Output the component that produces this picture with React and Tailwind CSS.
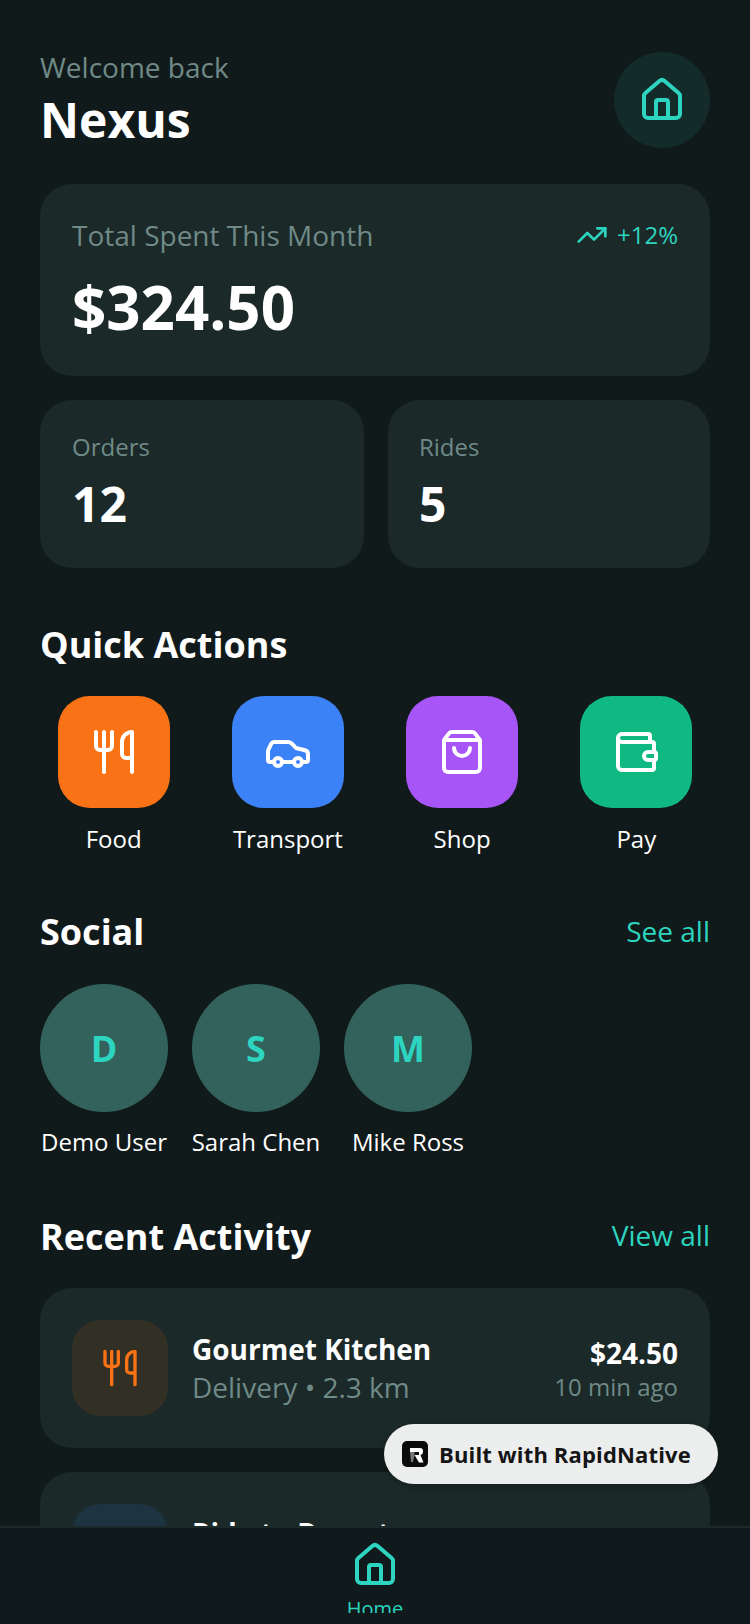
import React from "react";
import { House, TrendingUp, Utensils, Car, ShoppingBag, Wallet } from "lucide-react";

const actions = [
  { label: "Food", Icon: Utensils, bg: "bg-[#f97316]" },
  { label: "Transport", Icon: Car, bg: "bg-[#3b82f6]" },
  { label: "Shop", Icon: ShoppingBag, bg: "bg-[#a855f7]" },
  { label: "Pay", Icon: Wallet, bg: "bg-[#10b981]" },
];
const people = [
  { i: "D", name: "Demo User" },
  { i: "S", name: "Sarah Chen" },
  { i: "M", name: "Mike Ross" },
];

function Stat({ label, value, className }) {
  return (
    <div className={`h-[168px] rounded-[32px] bg-[#1b2929] py-8 ${className}`}>
      <p className="text-[24px] leading-[30px] text-[#6f8a87]">{label}</p>
      <p className="mt-[10px] text-[48px] leading-[64px] font-bold text-white">{value}</p>
    </div>
  );
}

export default function App() {
  return (
    <div className="relative flex h-[1624px] w-[750px] flex-col overflow-hidden bg-[#111a1a] font-['Open_Sans',sans-serif]">
      <main className="min-h-0 flex-1 overflow-hidden px-10 pt-[47px]">
        <header className="flex items-start justify-between">
          <div>
            <p className="text-[28px] leading-[40px] text-[#6f8a87]">Welcome back</p>
            <h1 className="mt-[3px] mb-px text-[48px] leading-[60px] font-bold text-white">Nexus</h1>
          </div>
          <div className="mt-[5px] flex h-24 w-24 items-center justify-center rounded-full bg-[#132b29]">
            <House size={48} strokeWidth={2} className="text-[#2dd4bf]" />
          </div>
        </header>

        <section className="mt-[33px] h-[192px] rounded-[32px] bg-[#1b2929] px-8 pt-[31px]">
          <div className="flex items-center justify-between">
            <p className="text-[28px] leading-[40px] text-[#6f8a87]">Total Spent This Month</p>
            <div className="flex items-center gap-[9px]">
              <TrendingUp size={32} strokeWidth={2} className="text-[#2dd4bf]" />
              <span className="text-[24px] leading-[32px] text-[#2dd4bf]">+12%</span>
            </div>
          </div>
          <p className="mt-4 text-[60px] leading-[72px] font-bold text-white">$324.50</p>
        </section>

        <div className="mt-6 flex gap-6">
          <Stat label="Orders" value="12" className="w-[324px] px-8" />
          <Stat label="Rides" value="5" className="flex-1 pl-[31px] pr-8" />
        </div>

        <section className="mt-[53px]">
          <h2 className="text-[36px] leading-[48px] font-bold text-white">Quick Actions</h2>
          <div className="mt-[27px] flex justify-between">
            {actions.map(({ label, Icon, bg }) => (
              <div key={label} className="flex w-[22%] flex-col items-center">
                <div className={`flex h-28 w-28 items-center justify-center rounded-[32px] ${bg}`}>
                  <Icon size={48} strokeWidth={2} className="text-white" />
                </div>
                <span className="mt-[13px] text-[24px] leading-[36px] text-white">{label}</span>
              </div>
            ))}
          </div>
        </section>

        <section className="mt-[51px]">
          <div className="flex items-center justify-between">
            <h2 className="text-[36px] leading-[48px] font-bold text-white">Social</h2>
            <span className="-mt-[2px] text-[28px] leading-[40px] text-[#2dd4bf]">See all</span>
          </div>
          <div className="mt-[28px] flex gap-6">
            {people.map((p) => (
              <div key={p.name} className="flex w-32 flex-col items-center">
                <div className="flex h-32 w-32 items-center justify-center rounded-full bg-[#33615c] pt-px">
                  <span className="text-[36px] leading-[48px] font-bold text-[#2dd4bf]">{p.i}</span>
                </div>
                <span className="mt-3 whitespace-nowrap text-[24px] leading-[36px] text-white">{p.name}</span>
              </div>
            ))}
          </div>
        </section>

        <section className="mt-[53px]">
          <div className="flex items-center justify-between">
            <h2 className="text-[36px] leading-[48px] font-bold text-white">Recent Activity</h2>
            <span className="-mt-[4px] text-[28px] leading-[40px] text-[#2dd4bf]">View all</span>
          </div>
          <div className="mt-[27px] flex flex-col gap-6">
            <div className="flex h-[160px] items-center gap-6 rounded-[32px] bg-[#1b2929] px-8">
              <div className="flex h-24 w-24 items-center justify-center rounded-[28px] bg-[#322f25]">
                <Utensils size={40} strokeWidth={2} className="text-[#f97316]" />
              </div>
              <div className="flex-1">
                <p className="text-[28px] leading-[38px] font-bold text-white">Gourmet Kitchen</p>
                <p className="text-[28px] leading-[38px] text-[#6f8a87]">Delivery • 2.3 km</p>
              </div>
              <div className="text-right">
                <p className="text-[28px] leading-[36px] font-bold text-white">$24.50</p>
                <p className="mt-px text-[24px] leading-[30px] text-[#6f8a87]">10 min ago</p>
              </div>
            </div>
            <div className="flex h-[160px] items-center gap-6 rounded-[32px] bg-[#1b2929] px-8">
              <div className="h-24 w-24 rounded-[28px] bg-[#1e3340]" />
              <div className="flex-1">
                <p className="text-[28px] leading-[38px] font-bold text-white">Ride to Downtown</p>
                <div className="h-[38px]" />
              </div>
            </div>
          </div>
        </section>
      </main>

      <nav className="h-[98px] shrink-0 border-t-2 border-[#1b2929] bg-[#10191b]">
        <div className="flex h-[85px] flex-col items-center overflow-hidden pt-[13px]">
          <House size={48} strokeWidth={2} className="shrink-0 text-[#2dd4bf]" />
          <span className="mt-[6px] text-[20px] leading-[28px] text-[#2dd4bf]">Home</span>
        </div>
      </nav>

      <div className="absolute left-[384px] top-[1424px] flex h-[60px] w-[334px] items-center gap-[11px] rounded-full bg-[#eceeee] pl-[18px] shadow-[0_2px_6px_rgba(0,0,0,0.25)]">
        <svg width="26" height="26" viewBox="0 0 26 26" className="shrink-0">
          <rect width="26" height="26" rx="5" fill="#0b0b0b" />
          <path d="M8 7H18a3 3 0 0 1 3 3v1a3 3 0 0 1-2.5 3L21.5 21.5H17L12.5 14H17V11H8z" fill="#ffffff" />
          <path d="M8 11h4.5v3l-1.5 7H9z" fill="#777777" />
        </svg>
        <span className="whitespace-nowrap text-[22px] leading-[32px] font-bold tracking-[0.15px] text-[#151515]">Built with RapidNative</span>
      </div>
    </div>
  );
}
